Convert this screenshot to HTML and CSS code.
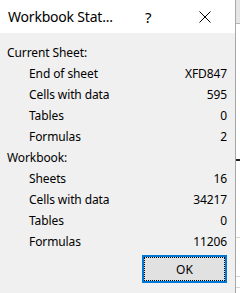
FILE: index.html
```html
<!DOCTYPE html>
<html>
<head>
<meta charset="utf-8">
<link rel="stylesheet" href="styles.css">
</head>
<body>
<div class="screen">
  <div class="dialog">
    <div class="titlebar">
      <div class="title">Workbook Stat...</div>
      <div class="help">?</div>
      <div class="close">
        <svg width="12" height="12" viewBox="0 0 12 12"><path d="M0.5 0.5 L11.5 11.5 M11.5 0.5 L0.5 11.5" stroke="#000" stroke-width="1" fill="none"/></svg>
      </div>
    </div>
    <div class="content">
      <div class="row head">Current Sheet:</div>
      <div class="row item"><span>End of sheet</span><span>XFD847</span></div>
      <div class="row item"><span>Cells with data</span><span>595</span></div>
      <div class="row item"><span>Tables</span><span>0</span></div>
      <div class="row item"><span>Formulas</span><span>2</span></div>
      <div class="row head">Workbook:</div>
      <div class="row item"><span>Sheets</span><span>16</span></div>
      <div class="row item"><span>Cells with data</span><span>34217</span></div>
      <div class="row item"><span>Tables</span><span>0</span></div>
      <div class="row item"><span>Formulas</span><span>11206</span></div>
      <div class="actions">
        <div class="btn"><div class="btn-focus">OK</div></div>
      </div>
    </div>
  </div>
  <div class="outside">
    <div class="hdr"></div>
    <div class="cell c1"></div>
    <div class="cell c2"></div>
    <div class="cell c3"></div>
    <div class="cell c4"></div>
  </div>
</div>
</body>
</html>
```
FILE: styles.css
```css
html, body {
  margin: 0;
  padding: 0;
}
body {
  width: 240px;
  height: 293px;
  overflow: hidden;
  font-family: "Noto Sans", "Open Sans", sans-serif;
  color: #000;
}
.screen {
  display: flex;
  width: 240px;
  height: 293px;
}
.dialog {
  width: 235px;
  height: 293px;
  border-right: 1px solid #a8a8a8;
  background: #f0f0f0;
  display: flex;
  flex-direction: column;
}
.titlebar {
  height: 33px;
  background: #fff;
  display: flex;
  align-items: center;
  flex-shrink: 0;
}
.title {
  font-size: 14px;
  letter-spacing: -0.2px;
  padding-left: 8px;
  width: 137px;
  white-space: nowrap;
}
.help {
  font-size: 15px;
  width: 14px;
}
.close {
  margin-left: 40px;
  display: flex;
  align-items: center;
}
.close svg {
  display: block;
}
.content {
  padding: 9px 8px 0 7px;
  font-size: 12px;
}
.row {
  height: 21px;
  line-height: 21px;
  display: flex;
  justify-content: space-between;
  white-space: nowrap;
  letter-spacing: -0.1px;
}
.item {
  padding-left: 22px;
}
.actions {
  display: flex;
  justify-content: flex-end;
  margin-top: 3px;
}
.btn {
  width: 81px;
  height: 24px;
  border: 2px solid #0078d7;
  background: #e1e1e1;
}
.btn-focus {
  height: 22px;
  border: 1px dotted #000;
  display: flex;
  align-items: center;
  justify-content: center;
  font-size: 12px;
}
.outside {
  width: 4px;
  height: 293px;
  background: #fff;
  display: flex;
  flex-direction: column;
}
.hdr {
  height: 23px;
  background: #e6e6e6;
  border-bottom: 1px solid #b5b5b5;
}
.cell {
  border-bottom: 1px solid #d4d4d4;
}
.c1 { height: 135px; border-bottom: 2px solid #222; }
.c2 { height: 76px; }
.c3 { height: 38px; }
.c4 { height: 10px; }
```
